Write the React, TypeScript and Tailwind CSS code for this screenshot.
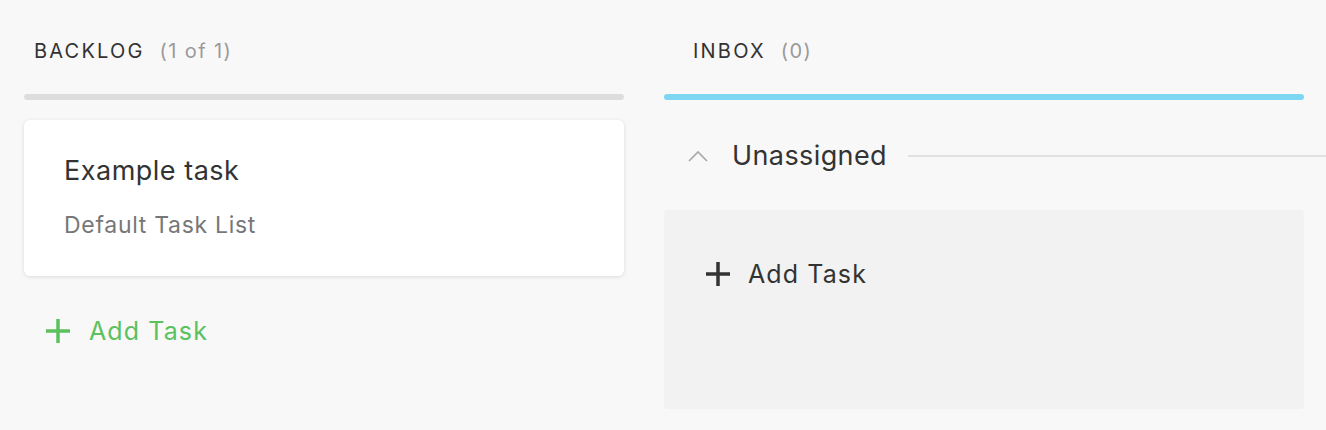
import React from "react";

function Plus({ color }: { color: string }) {
  return (
    <svg width="24" height="24" viewBox="0 0 24 24" className="shrink-0">
      <rect x="10.25" y="0" width="3.5" height="24" fill={color} />
      <rect x="0" y="10.25" width="24" height="3.5" fill={color} />
    </svg>
  );
}

function ChevronUp() {
  return (
    <svg width="20" height="12" viewBox="0 0 20 12" className="shrink-0">
      <polyline points="1,11 10,2 19,11" fill="none" stroke="#a8a8a8" strokeWidth="1.6" />
    </svg>
  );
}

export default function App() {
  return (
    <div
      className="w-[1326px] h-[430px] overflow-hidden bg-[#f8f8f8] text-[#333333]"
      style={{ fontFamily: "Inter, 'Noto Sans', sans-serif" }}
    >
      <div className="flex gap-[40px] pl-[24px]">
        {/* Backlog column */}
        <div className="w-[600px] shrink-0 flex flex-col">
          <div className="pt-[39px] pl-[10px] flex items-baseline gap-[15px] text-[20px] leading-[24px]">
            <span className="tracking-[2.2px] text-[#333333]">BACKLOG</span>
            <span className="tracking-[1.4px] text-[#9a9a9a]">(1 of 1)</span>
          </div>
          <div className="mt-[31px] h-[6px] rounded-full bg-[#dddddd]" />
          <div className="mt-[20px] bg-white rounded-[6px] shadow-[0_1px_4px_rgba(0,0,0,0.12)] pl-[40px] pt-[35px] pb-[37px]">
            <div className="text-[27px] leading-[32px] tracking-[0.5px] text-[#333333]">Example task</div>
            <div className="mt-[24px] text-[23px] leading-[28px] tracking-[0.7px] text-[#777777]">Default Task List</div>
          </div>
          <div className="mt-[39px] pl-[22px] flex items-center gap-[19px]">
            <Plus color="#5bc15e" />
            <span className="text-[25px] leading-[32px] tracking-[1.1px] text-[#5bc15e]">Add Task</span>
          </div>
        </div>

        {/* Inbox column */}
        <div className="w-[640px] shrink-0 flex flex-col">
          <div className="pt-[39px] pl-[29px] flex items-baseline gap-[15px] text-[20px] leading-[24px]">
            <span className="tracking-[2.2px] text-[#333333]">INBOX</span>
            <span className="tracking-[1.4px] text-[#9a9a9a]">(0)</span>
          </div>
          <div className="mt-[31px] h-[6px] rounded-full bg-[#7dd7f2]" />
          <div className="mt-[40px] -mr-[22px] pl-[24px] flex items-center">
            <ChevronUp />
            <span className="ml-[24px] text-[27px] leading-[32px] tracking-[0.4px] text-[#333333]">Unassigned</span>
            <div className="ml-[21px] flex-1 h-[2px] bg-[#e0e0e0]" />
          </div>
          <div className="mt-[38px] h-[199px] rounded-[4px] bg-[#f2f2f2] pl-[42px] pt-[48px]">
            <div className="flex items-center gap-[18px]">
              <Plus color="#333333" />
              <span className="text-[25px] leading-[32px] tracking-[1.1px] text-[#333333]">Add Task</span>
            </div>
          </div>
        </div>
      </div>
    </div>
  );
}
